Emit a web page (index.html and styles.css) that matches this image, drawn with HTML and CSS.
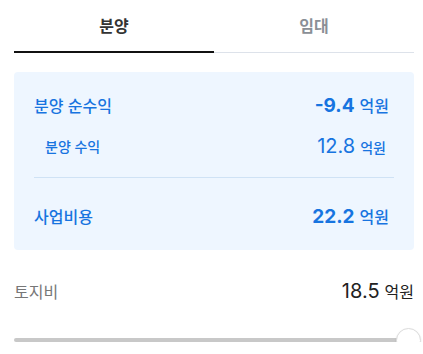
FILE: index.html
```html
<!DOCTYPE html>
<html lang="ko">
<head>
    <meta charset="UTF-8">
    <meta name="viewport" content="width=device-width, initial-scale=1.0">
    <title>분양 수지</title>
    <link rel="stylesheet" href="styles.css">
</head>
<body>
    <div class="page">
        <nav class="tabs">
            <div class="tab active">분양</div>
            <div class="tab">임대</div>
        </nav>

        <section class="summary">
            <div class="row main">
                <span class="label">분양 순수익</span>
                <span class="value"><b>-9.4</b> 억원</span>
            </div>
            <div class="row sub">
                <span class="label">분양 수익</span>
                <span class="value"><b>12.8</b> 억원</span>
            </div>
            <hr class="divider">
            <div class="row main">
                <span class="label">사업비용</span>
                <span class="value"><b>22.2</b> 억원</span>
            </div>
        </section>

        <div class="field">
            <span class="field-label">토지비</span>
            <span class="field-value"><b>18.5</b> 억원</span>
        </div>
        <div class="slider">
            <div class="track"></div>
            <div class="thumb"></div>
        </div>
    </div>
</body>
</html>
```

FILE: styles.css
```css
body {
    margin: 0;
    font-family: Inter, "Noto Sans CJK KR", sans-serif;
    background-color: #fff;
    color: #222;
}
.page {
    width: 400px;
    margin-left: 14px;
}
.tabs {
    display: flex;
    height: 53px;
}
.tab {
    flex: 1;
    display: flex;
    align-items: center;
    justify-content: center;
    padding-bottom: 3px;
    font-size: 16px;
    font-weight: 700;
    color: #8a8f96;
    border-bottom: 1px solid #dde2ea;
    box-sizing: border-box;
}
.tab.active {
    color: #333;
    border-bottom: 2px solid #111;
    padding-bottom: 2px;
}
.summary {
    margin-top: 19px;
    padding: 20px;
    background-color: #eef6ff;
    border-radius: 4px;
    color: #1774e0;
}
.row {
    display: flex;
    justify-content: space-between;
    align-items: center;
}
.row.main {
    height: 26px;
    padding-right: 5px;
    font-size: 16px;
    font-weight: 500;
}
.row.main b {
    font-size: 19px;
    font-weight: 700;
}
.row.sub {
    height: 28px;
    margin-top: 14px;
    padding: 0 8px 0 11px;
    font-size: 14px;
    font-weight: 500;
}
.row.sub b {
    font-size: 20px;
    font-weight: 400;
}
.row .value {
    display: flex;
    align-items: baseline;
    gap: 5px;
}
.divider {
    margin: 17px 0 24px;
    border: none;
    border-top: 1px solid #cfe2f5;
}
.summary .row.main:last-child {
    height: 28px;
}
.field {
    display: flex;
    justify-content: space-between;
    align-items: center;
    margin-top: 28px;
    height: 26px;
}
.field-label {
    font-size: 16px;
    color: #777;
}
.field-value {
    display: flex;
    align-items: baseline;
    gap: 5px;
    font-size: 16px;
    color: #222;
}
.field-value b {
    font-size: 20px;
    font-weight: 400;
}
.slider {
    position: relative;
    margin-top: 34px;
    height: 4px;
}
.track {
    height: 4px;
    border-radius: 2px;
    background-color: #c8c8c8;
}
.thumb {
    position: absolute;
    right: -7px;
    top: -10px;
    width: 23px;
    height: 23px;
    border-radius: 50%;
    background-color: #fff;
    border: 1px solid #dcdcdc;
    box-shadow: 0 1px 2px rgba(0, 0, 0, 0.12);
}
```
